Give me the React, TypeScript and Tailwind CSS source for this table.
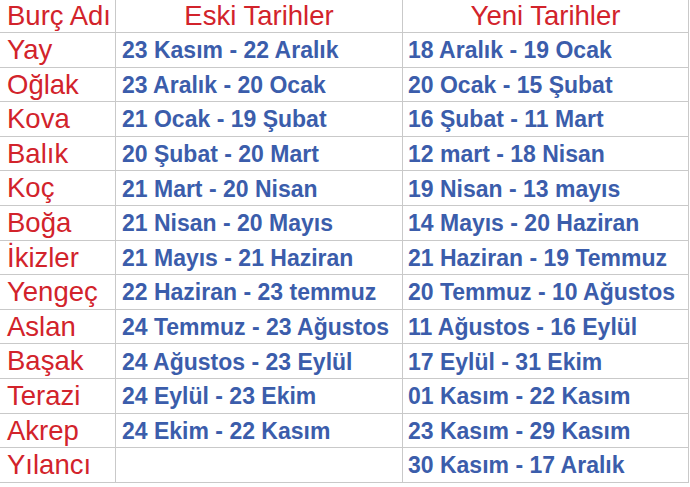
import React from 'react';

const rows: [string, string, string][] = [
  ['Yay', '23 Kasım - 22 Aralık', '18 Aralık - 19 Ocak'],
  ['Oğlak', '23 Aralık - 20 Ocak', '20 Ocak - 15 Şubat'],
  ['Kova', '21 Ocak - 19 Şubat', '16 Şubat - 11 Mart'],
  ['Balık', '20 Şubat - 20 Mart', '12 mart - 18 Nisan'],
  ['Koç', '21 Mart - 20 Nisan', '19 Nisan - 13 mayıs'],
  ['Boğa', '21 Nisan - 20 Mayıs', '14 Mayıs - 20 Haziran'],
  ['İkizler', '21 Mayıs - 21 Haziran', '21 Haziran - 19 Temmuz'],
  ['Yengeç', '22 Haziran - 23 temmuz', '20 Temmuz - 10 Ağustos'],
  ['Aslan', '24 Temmuz - 23 Ağustos', '11 Ağustos - 16 Eylül'],
  ['Başak', '24 Ağustos - 23 Eylül', '17 Eylül - 31 Ekim'],
  ['Terazi', '24 Eylül - 23 Ekim', '01 Kasım - 22 Kasım'],
  ['Akrep', '24 Ekim - 22 Kasım', '23 Kasım - 29 Kasım'],
  ['Yılancı', '', '30 Kasım - 17 Aralık'],
];

const red = 'text-[#d2232b] text-[27.5px] leading-none';
const blue = 'text-[#3b5dab] text-[23px] font-bold leading-none inline-block scale-y-[1.08]';

export default function App() {
  return (
    <div className="w-[690px] h-[487px] bg-white overflow-hidden font-['Liberation_Sans',Arial,sans-serif]">
      <div className="grid grid-cols-[116px_287px_286px] w-[689px]">
        <div className="h-[33px] border-r border-b border-[#c9c9c9] flex items-center pl-[7px]">
          <span className={red}>Burç Adı</span>
        </div>
        <div className="h-[33px] border-r border-b border-[#c9c9c9] flex items-center justify-center">
          <span className={red}>Eski Tarihler</span>
        </div>
        <div className="h-[33px] border-r border-b border-[#c9c9c9] flex items-center justify-center">
          <span className={red}>Yeni Tarihler</span>
        </div>
        {rows.map(([name, oldDate, newDate]) => (
          <React.Fragment key={name}>
            <div className="h-[34.6px] border-r border-b border-[#c9c9c9] flex items-center pl-[7px]">
              <span className={red}>{name}</span>
            </div>
            <div className="h-[34.6px] border-r border-b border-[#c9c9c9] flex items-center pl-[6px]">
              <span className={blue}>{oldDate}</span>
            </div>
            <div className="h-[34.6px] border-r border-b border-[#c9c9c9] flex items-center pl-[5px]">
              <span className={blue}>{newDate}</span>
            </div>
          </React.Fragment>
        ))}
      </div>
    </div>
  );
}
